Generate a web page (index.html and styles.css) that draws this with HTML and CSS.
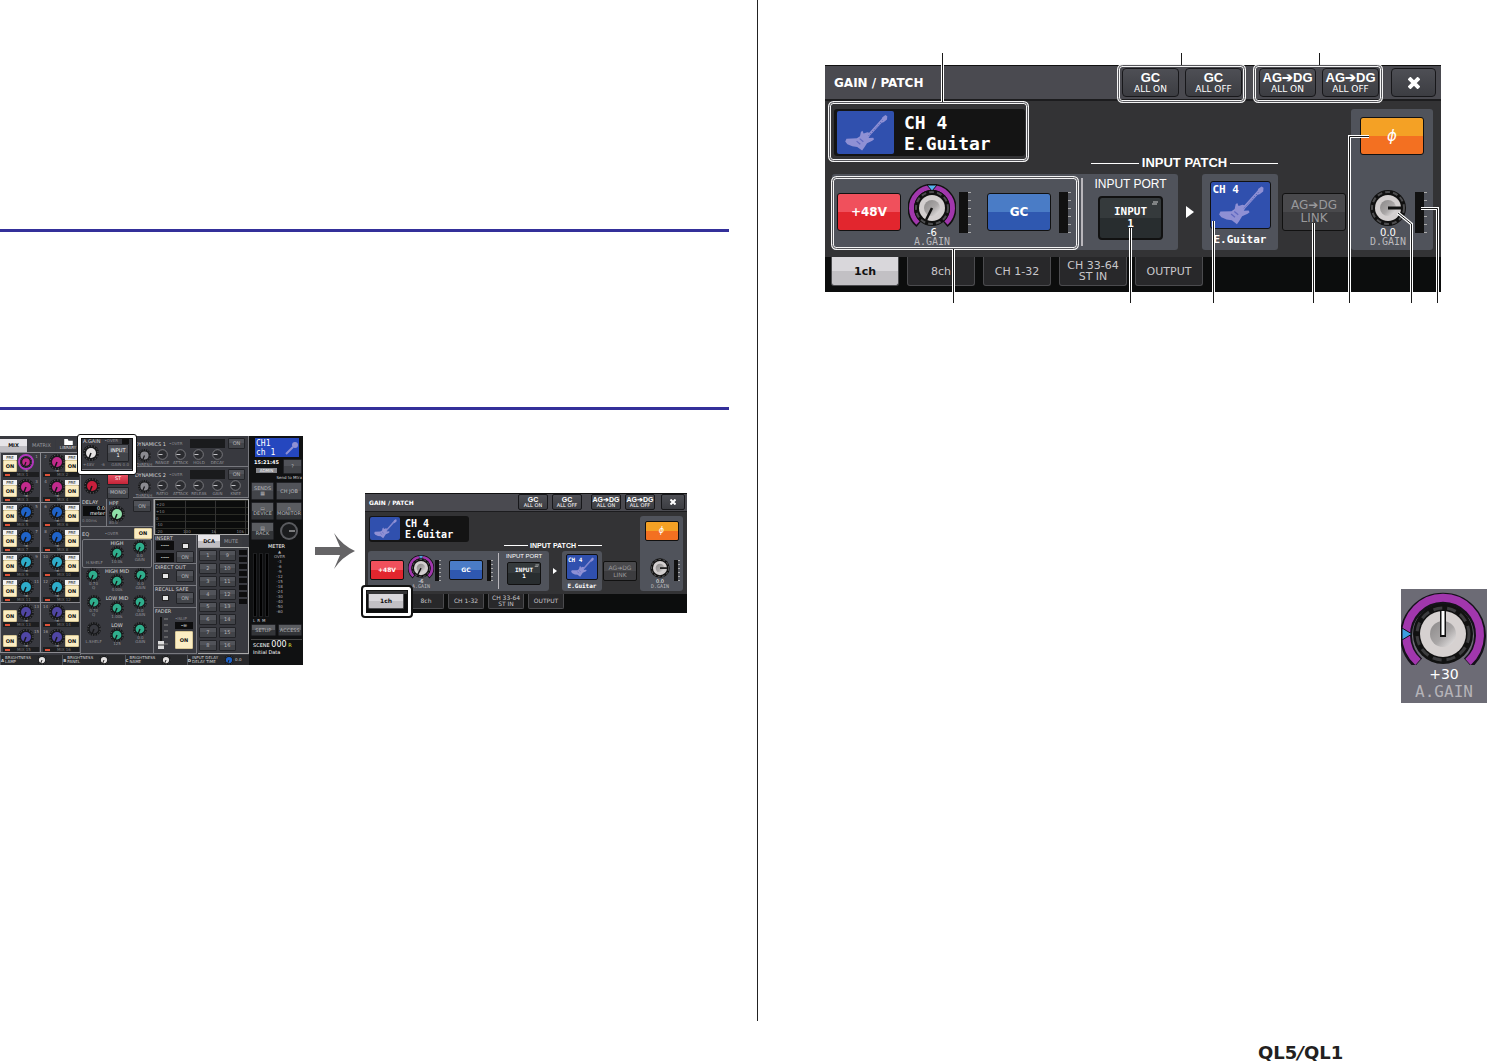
FILE: index.html
```html
<!DOCTYPE html>
<html lang="en">
<head>
    <meta charset="UTF-8">
    <meta name="viewport" content="width=device-width, initial-scale=1.0">
    <title>QL5/QL1 Reference Manual</title>
    <link rel="stylesheet" href="styles.css">
</head>
<body>
    <svg class="defs" width="0" height="0" aria-hidden="true">
        <defs>
            <linearGradient id="metal" x1="0" y1="0" x2="1" y2="1">
                <stop offset="0" stop-color="#8a8888"/>
                <stop offset="0.55" stop-color="#a9a6a6"/>
                <stop offset="1" stop-color="#f0eded"/>
            </linearGradient>
        </defs>
        <symbol id="guitar" viewBox="0 0 182 140">
            <path fill="#8f90d4" d="M146 20l10-7 6 4-1 11-11 9-6 1-38 42-5 8 15-1 3 5-6 5-17 8-9 14-7 10-16-12-16-2-16-7-7-9 4-9 34-1 10-7 3-14 5-4 4 9 12-4 6 2 41-46z"/>
            <path fill="none" stroke="#3450b0" stroke-width="3" stroke-dasharray="3 5" d="M102 80l44-49"/>
            <path fill="none" stroke="#5f68c0" stroke-width="4" d="M62 98l12 10M72 90l12 10"/>
        </symbol>
        <symbol id="knob" viewBox="0 0 48 44">
            <circle cx="24" cy="24" r="18" fill="#101010"/>
            <circle cx="24" cy="24" r="16" fill="none" stroke="#4c4c4e" stroke-width="2" stroke-dasharray="5 3"/>
            <circle cx="24" cy="24" r="13" fill="#d3cfcf"/>
            <circle cx="24" cy="24" r="8" fill="url(#metal)"/>
        </symbol>
        <symbol id="ring" viewBox="0 0 48 44">
            <path fill="none" stroke="#111" stroke-width="8" d="M11 40A20.500 20.500 0 1 1 37 40"/>
            <path fill="none" stroke="#a137ad" stroke-width="5" d="M10 39A20.500 20.500 0 1 1 38 39"/>
        </symbol>
        <symbol id="dial" viewBox="0 0 16 16">
            <circle cx="8" cy="8" r="8" fill="#17181a"/>
            <circle cx="8" cy="8" r="7" fill="none" stroke="#77787c" stroke-width="1" stroke-dasharray="1 2"/>
            <circle cx="8" cy="8" r="5" fill="currentColor"/>
            <path stroke="#161618" stroke-width="1.500" d="M8 8l-2 5"/>
        </symbol>
        <symbol id="dial-line" viewBox="0 0 16 16">
            <circle cx="8" cy="8" r="7" fill="#2b2c30" stroke="#97989c" stroke-width="1"/>
            <path stroke="#c4c4c8" stroke-width="1.500" d="M8 8H2"/>
        </symbol>
    </svg>

    <main class="spread">
        <section class="page page-left">
            <hr class="rule rule-first">
            <hr class="rule rule-second">
            <div class="figure-row">
                <div class="console">
                    <div class="mixes">
                        <div class="mix-tabs">
                            <button class="mix-tab active">MIX</button>
                            <button class="mix-tab">MATRIX</button>
                            <button class="mix-tab library"><svg viewBox="0 0 10 7"><path fill="#fff" d="M0 0h4l1 2h5v5H0z"/></svg>LIBRARY</button>
                        </div>
                        <div class="mix-grid" id="mix-grid"></div>
                    </div>
                    <div class="centre">
                        <div class="upper">
                            <div class="input-col">
                                <div class="cell again">
                                    <div class="line"><span>A.GAIN</span><span class="dim">•OVER</span><i class="lamp"></i></div>
                                    <div class="line">
                                        <svg class="dial white"><use href="#dial"/></svg>
                                        <button class="key port-key">INPUT<br>1</button>
                                    </div>
                                    <div class="line dim"><span>+48V</span><span>-6</span><span>GAIN 0.0</span></div>
                                </div>
                                <div class="pan">
                                    <svg class="dial red"><use href="#dial"/></svg>
                                    <div class="stack">
                                        <button class="key st">ST</button>
                                        <button class="key">MONO</button>
                                    </div>
                                </div>
                            </div>
                            <div class="dynamics" id="dynamics"></div>
                        </div>
                        <div class="lower">
                            <div class="eq-col">
                                <div class="delay-row">
                                    <div class="cell delay">DELAY<div class="readout">0.0<br>meter</div><span class="dim">0.00ms</span></div>
                                    <div class="cell hpf"><span>HPF</span><button class="key">ON</button><svg class="dial mint"><use href="#dial"/></svg><span class="dim">80.0</span></div>
                                </div>
                                <div class="cell eq">
                                    <div class="line"><span>EQ</span><span class="dim">•OVER</span><button class="on">ON</button></div>
                                    <div id="eq-bands"></div>
                                </div>
                            </div>
                            <div class="output-col">
                                <div class="graph">
                                    <span>+20</span><span>+10</span><span>0</span><span>-10</span>
                                    <div class="line"><span>-20</span><span>100</span><span>1k</span><span>10k</span></div>
                                </div>
                                <div class="outs">
                                    <div class="out-stack">
                                        <div class="cell insert">INSERT<div class="out-pair"><b>----</b><i class="window"></i><b>----</b><button class="key">ON</button></div></div>
                                        <div class="cell">DIRECT OUT<div class="out-pair"><i class="window"></i><button class="key">ON</button></div></div>
                                        <div class="cell">RECALL SAFE<div class="out-pair"><i class="window"></i><button class="key">ON</button></div></div>
                                        <div class="cell fader">FADER
                                            <div class="fader-body">
                                                <svg viewBox="0 0 16 34"><path stroke="#111" stroke-width="2" d="M5 1v32"/><path stroke="#888" d="M8 3h4M8 9h4M8 15h4M8 21h4M8 28h4"/><path fill="#ddd" d="M2 25h6v8H2z"/><path stroke="#333" d="M2 29h6"/></svg>
                                                <div class="stack"><span class="dim">•ISLIP</span><b>-∞</b><button class="on big">ON</button></div>
                                            </div>
                                        </div>
                                    </div>
                                    <div class="dca">
                                        <div class="dca-tabs"><button class="mix-tab active">DCA</button><button class="mix-tab">MUTE</button></div>
                                        <div class="dca-body"><div class="dca-grid" id="dca-grid"></div><div class="mute-lamps"></div></div>
                                    </div>
                                </div>
                            </div>
                        </div>
                    </div>
                    <div class="side">
                        <div class="side-channel"><span>CH1<br>ch 1</span><svg viewBox="0 0 14 14"><circle cx="10" cy="4" r="3" fill="#8f90d4"/><path stroke="#8f90d4" stroke-width="2" d="M8 6L1 13"/></svg></div>
                        <div class="side-clock"><div><b>15:21:45</b><span class="admin">ADMIN</span></div><button class="key">?</button></div>
                        <div class="side-note">Send to Mtrx</div>
                        <div class="side-keys">
                            <button class="key">SENDS<br>▦</button><button class="key">CH JOB</button>
                            <button class="key glossy">▭<br>DEVICE</button><button class="key glossy">∩<br>MONITOR</button>
                            <button class="key glossy">▤<br>RACK</button>
                            <svg class="dial" viewBox="0 0 18 18"><circle cx="9" cy="9" r="9" fill="#5a5b5f"/><circle cx="9" cy="9" r="7" fill="#1b1c1e"/><path stroke="#ddd" d="M9 9h6"/></svg>
                        </div>
                        <div class="side-title">METER</div>
                        <div class="side-meter">
                            <i></i><i></i><i></i>
                            <ul><li>▲</li><li>OVER</li><li>-3</li><li>-6</li><li>-9</li><li>-12</li><li>-15</li><li>-18</li><li>-24</li><li>-30</li><li>-40</li><li>-50</li><li>-60</li></ul>
                        </div>
                        <div class="side-lrm">L&ensp;R&ensp;M</div>
                        <div class="side-keys setup"><button class="key glossy">SETUP</button><button class="key glossy">ACCESS</button></div>
                        <div class="side-scene"><span>SCENE <b>000</b> <em>R</em></span><span>Initial Data</span></div>
                    </div>
                    <div class="console-foot">
                        <div><b>A</b><span>BRIGHTNESS<br>LAMP</span><svg class="dial white"><use href="#dial"/></svg></div>
                        <div><b>B</b><span>BRIGHTNESS<br>PANEL</span><svg class="dial white"><use href="#dial"/></svg></div>
                        <div><b>C</b><span>BRIGHTNESS<br>NAME</span><svg class="dial white"><use href="#dial"/></svg></div>
                        <div><b>D</b><span>INPUT DELAY<br>DELAY TIME</span><svg class="dial blue"><use href="#dial"/></svg><span>0.0</span></div>
                    </div>
                    <div class="highlight highlight-gain"></div>
                </div>
                <svg class="arrow" viewBox="0 0 40 36" aria-hidden="true"><path fill="#656466" d="M0 14h25L19 0q8 12 21 18-13 6-21 18l6-14H0z"/></svg>
                <div class="mini-figure">
                    <div class="gain-panel mini" data-panel></div>
                    <div class="highlight highlight-tab"></div>
                </div>
            </div>
        </section>

        <section class="page page-right">
            <div class="figure-large">
                <div class="gain-panel" data-panel></div>
                <svg class="callouts" viewBox="825 53 616 250" aria-hidden="true">
                    <g class="frame">
                        <rect x="1118.500" y="65.500" width="126" height="36" rx="4"/>
                        <rect x="1254.500" y="65.500" width="127" height="36" rx="4"/>
                        <rect x="829.500" y="102.500" width="198" height="58" rx="4"/>
                        <rect x="832.500" y="177.500" width="245" height="71" rx="4"/>
                    </g>
                    <g class="frame-core">
                        <rect x="1118.500" y="65.500" width="126" height="36" rx="4"/>
                        <rect x="1254.500" y="65.500" width="127" height="36" rx="4"/>
                        <rect x="829.500" y="102.500" width="198" height="58" rx="4"/>
                        <rect x="832.500" y="177.500" width="245" height="71" rx="4"/>
                    </g>
                    <g class="lead-halo">
                        <path d="M942.500 65v37M953.500 249v43M1130.500 228v64M1213.500 221v71M1313.500 223v69M1369 136.500h-19.500V292M1398 213l13.500 11v68M1421 208.500h16.500V292"/>
                    </g>
                    <g class="lead">
                        <path d="M942.500 53v49M1181.500 53v12M1319.500 53v12M953.500 249v54M1130.500 228v75M1213.500 221v82M1313.500 223v80M1369 136.500h-19.500V303M1398 213l13.500 11v79M1421 208.500h16.500V303"/>
                    </g>
                </svg>
            </div>
            <div class="gain-closeup">
                <svg viewBox="0 0 86 76" aria-hidden="true">
                    <path fill="none" stroke="#15121a" stroke-width="12" d="M17 74A37 37 0 1 1 67 74"/>
                    <path fill="none" stroke="#a137ad" stroke-width="8" d="M17 73A37 37 0 1 1 67 73"/>
                    <circle cx="42" cy="45" r="30" fill="#111"/>
                    <circle cx="42" cy="45" r="26" fill="none" stroke="#3c3c3e" stroke-width="3" stroke-dasharray="9 5"/>
                    <circle cx="42" cy="45" r="23" fill="#d6d1d0"/>
                    <circle cx="42" cy="45" r="13" fill="url(#metal)"/>
                    <path stroke="#111" stroke-width="6" d="M42 21v27"/>
                    <path stroke="#fff" stroke-width="3" d="M42 22v24"/>
                    <path fill="#3c9de0" stroke="#111" d="M1 39l10 6-10 6z"/>
                </svg>
                <div class="closeup-value">+30</div>
                <div class="closeup-label">A.GAIN</div>
            </div>
        </section>
    </main>
    <footer class="page-foot"><span class="logo">QL5<i>/</i>QL1</span></footer>

    <template id="panel-template">
        <div class="gain-head">
            <span class="gain-title">GAIN / PATCH</span>
            <div class="head-group">
                <button class="head-btn"><b>GC</b><span>ALL ON</span></button>
                <button class="head-btn"><b>GC</b><span>ALL OFF</span></button>
            </div>
            <div class="head-group">
                <button class="head-btn"><b>AG➔DG</b><span>ALL ON</span></button>
                <button class="head-btn"><b>AG➔DG</b><span>ALL OFF</span></button>
            </div>
            <button class="head-btn close" aria-label="Close"><svg viewBox="0 0 12 12"><path stroke="#fff" stroke-width="4" d="M1 1l10 10M11 1L1 11"/></svg></button>
        </div>
        <div class="gain-body">
            <div class="gain-main">
                <div class="channel-name">
                    <svg><use href="#guitar"/></svg>
                    <div>CH 4<br>E.Guitar</div>
                </div>
                <div class="patch-label">INPUT PATCH</div>
                <div class="strip">
                    <div class="block block-gain">
                        <button class="key48 pad-btn">+48V</button>
                        <div class="knob-col">
                            <svg viewBox="0 0 48 44"><use href="#ring"/><use href="#knob"/><path fill="#54b4f0" stroke="#111" d="M19 1h10l-5 6z"/><path stroke="#111" stroke-width="2.500" d="M24 24l-6 12"/></svg>
                            <span>-6</span><span class="knob-label">A.GAIN</span>
                        </div>
                        <i class="meter"></i>
                        <button class="gc pad-btn">GC</button>
                        <i class="meter"></i>
                        <div class="port">
                            <span>INPUT PORT</span>
                            <button class="port-btn">INPUT<br>1<svg viewBox="0 0 7 5"><path fill="none" stroke="#ccc" d="M2 1h5M1 3h5"/></svg></button>
                        </div>
                    </div>
                    <svg class="play" viewBox="0 0 8 12"><path fill="#fff" d="M0 0l8 6-8 6z"/></svg>
                    <div class="block block-channel">
                        <button class="channel-btn"><svg><use href="#guitar"/></svg><span>CH 4</span></button>
                        <span class="channel-caption">E.Guitar</span>
                    </div>
                    <button class="link-btn pad-btn">AG➔DG<br>LINK</button>
                </div>
            </div>
            <div class="block block-digital">
                <button class="phase pad-btn">ϕ</button>
                <div class="digital-row">
                    <div class="knob-col">
                        <svg viewBox="0 0 48 44"><use href="#knob"/><path stroke="#111" stroke-width="3" d="M24 24h14"/></svg>
                        <span>0.0</span><span class="knob-label">D.GAIN</span>
                    </div>
                    <i class="meter"></i>
                </div>
            </div>
        </div>
        <div class="gain-tabs">
            <button class="tab active">1ch</button>
            <button class="tab">8ch</button>
            <button class="tab">CH 1-32</button>
            <button class="tab">CH 33-64<br>ST IN</button>
            <button class="tab">OUTPUT</button>
        </div>
    </template>
    <script src="script.js"></script>
</body>
</html>
```

FILE: styles.css
```css
* {
    box-sizing: border-box;
}
body {
    margin: 0;
    min-height: 100vh;
    display: flex;
    flex-direction: column;
    background: #fff;
    font-family: "DejaVu Sans", sans-serif;
}
button {
    margin: 0;
    padding: 0;
    border: 1px solid #111;
    font-family: inherit;
    color: inherit;
}
svg {
    display: block;
    flex: none;
}
.defs {
    position: absolute;
}
.spread {
    flex: 1;
    display: grid;
    grid-template-columns: 758fr 730fr;
}
.page-left {
    border-right: 1px solid #222;
    padding-right: 28px;
}
.page-right {
    padding: 65px 1px 0 67px;
}
.rule {
    height: 3px;
    border: 0;
    margin: 0;
    background: #34309a;
}
.rule-first {
    margin-top: 229px;
}
.rule-second {
    margin-top: 175px;
    margin-bottom: 26px;
}
.figure-row {
    display: flex;
    align-items: center;
}
.arrow {
    width: 40px;
    height: 36px;
    margin: 0 10px 0 12px;
}
.page-foot {
    height: 40px;
    padding-right: 98px;
    display: flex;
    justify-content: flex-end;
    align-items: flex-end;
}
.logo {
    width: 132px;
    font-size: 18px;
    line-height: 16px;
    font-weight: bold;
    color: #231f20;
}

/* gain / patch window */
.gain-panel {
    max-width: 616px;
    background: #0c0d0d;
    color: #fff;
    font-size: 11px;
}
.gain-head {
    height: 36px;
    padding: 0 5px 0 9px;
    display: flex;
    align-items: center;
    background: #4a4a50;
    border-top: 1px solid #111;
    border-bottom: 2px solid #1c1c1e;
}
.gain-title {
    flex: 1;
    font-size: 12px;
    font-weight: bold;
    white-space: nowrap;
}
.head-group {
    display: flex;
    gap: 6px;
    margin-left: 17px;
}
.head-btn {
    width: 57px;
    height: 29px;
    display: flex;
    flex-direction: column;
    align-items: center;
    justify-content: center;
    background: linear-gradient(#4e4f55, #3c3d42);
    border: 1px solid #17171a;
    border-radius: 4px;
    font-size: 9px;
    line-height: 10px;
    white-space: nowrap;
}
.head-btn b {
    font-family: "Liberation Sans", sans-serif;
    font-size: 13px;
    line-height: 13px;
}
.head-btn.close {
    width: 45px;
    margin-left: 12px;
}
.close svg {
    width: 12px;
    height: 12px;
}
.gain-body {
    display: flex;
    gap: 5px;
    padding: 8px 8px 7px 7px;
    background: #333335;
}
.gain-main {
    flex: 1;
}
.channel-name {
    width: 191px;
    height: 47px;
    margin-left: 2px;
    padding: 2px 3px;
    display: flex;
    align-items: center;
    gap: 10px;
    background: #141414;
    border-radius: 3px;
    font: bold 18px/21px "DejaVu Sans Mono", monospace;
    white-space: nowrap;
}
.channel-name svg {
    width: 57px;
    height: 43px;
    background: #3050ae;
    border-radius: 2px;
}
.patch-label {
    width: 187px;
    margin: 0 0 4px 259px;
    display: flex;
    align-items: center;
    gap: 3px;
    font: bold 13px/14px "Liberation Sans", sans-serif;
    white-space: nowrap;
}
.patch-label::before,
.patch-label::after {
    content: "";
    flex: 1;
    height: 1px;
    background: #fff;
}
.strip {
    display: flex;
    align-items: center;
}
.block {
    background: #50535b;
    border-radius: 3px;
}
.block-gain {
    flex: 1;
    height: 76px;
    padding-left: 5px;
    display: flex;
    align-items: flex-start;
}
.pad-btn {
    flex: none;
    width: 64px;
    height: 38px;
    border-radius: 3px;
    font-size: 12px;
    font-weight: bold;
}
.block-gain .pad-btn {
    margin-top: 19px;
}
.key48 {
    background: linear-gradient(#f0505c 50%, #e2262e 50%);
}
.block-gain .gc {
    margin-left: 16px;
    background: linear-gradient(#4a7cc6 50%, #2f58b0 50%);
}
.knob-col {
    width: 48px;
    margin: 10px 3px 0 7px;
    display: flex;
    flex-direction: column;
    align-items: center;
    font-size: 10px;
    line-height: 9px;
}
.knob-col svg {
    width: 48px;
    height: 44px;
}
.knob-label {
    font-family: "DejaVu Sans Mono", monospace;
    font-size: 10px;
    color: #bbb9bd;
}
.meter {
    flex: none;
    width: 12px;
    height: 41px;
    margin-top: 18px;
    background: linear-gradient(90deg, #111 9px, transparent 9px), repeating-linear-gradient(#aaa 0 1px, transparent 1px 8px);
}
.gc + .meter {
    margin-left: 8px;
}
.port {
    flex: 1;
    height: 68px;
    margin: 4px 0 0 10px;
    border-left: 2px solid #b9b7bc;
    display: flex;
    flex-direction: column;
    align-items: center;
    gap: 6px;
    font: 12px/12px "Liberation Sans", sans-serif;
    white-space: nowrap;
}
.port-btn {
    position: relative;
    width: 65px;
    height: 44px;
    border: 2px solid #111;
    border-radius: 4px;
    background: linear-gradient(#353a3c 50%, #282d2f 50%);
    font: bold 11px/12px "DejaVu Sans Mono", monospace;
}
.port-btn svg {
    position: absolute;
    top: 3px;
    right: 3px;
    width: 7px;
    height: 5px;
}
.play {
    width: 8px;
    height: 12px;
    margin: 0 8px;
}
.block-channel {
    width: 76px;
    height: 76px;
    margin-right: 4px;
    padding-top: 7px;
    display: flex;
    flex-direction: column;
    align-items: center;
    gap: 5px;
}
.channel-btn {
    width: 61px;
    height: 48px;
    display: grid;
    background: #3050ae;
    border-radius: 3px;
}
.channel-btn svg,
.channel-btn span {
    grid-area: 1 / 1;
}
.channel-btn svg {
    width: 59px;
    height: 46px;
}
.channel-btn span {
    justify-self: start;
    padding: 2px;
    font: bold 11px/12px "DejaVu Sans Mono", monospace;
}
.channel-caption {
    font: bold 11px/12px "DejaVu Sans Mono", monospace;
}
.link-btn {
    background: linear-gradient(#49494c 50%, #3c3c3f 50%);
    color: #99999c;
    font-weight: normal;
    line-height: 13px;
    white-space: nowrap;
}
.block-digital {
    width: 82px;
    padding-top: 8px;
    display: flex;
    flex-direction: column;
    align-items: center;
    gap: 19px;
}
.phase {
    background: linear-gradient(#f4a125 50%, #f37021 50%);
    font-size: 15px;
    font-style: italic;
    font-weight: normal;
}
.digital-row {
    display: flex;
}
.gain-tabs {
    height: 35px;
    padding-left: 6px;
    display: flex;
    align-items: flex-start;
    gap: 8px;
}
.tab {
    width: 68px;
    height: 29px;
    border: 1px solid #4b4b4e;
    border-top: 0;
    border-radius: 0 0 3px 3px;
    background: #28282a;
    color: #c9c7ca;
    font-size: 11px;
    line-height: 11px;
    white-space: nowrap;
}
.tab.active {
    background: linear-gradient(#d9d7db 50%, #c2c0c4 50%);
    color: #111;
    font-weight: bold;
}

/* half size copy of the window */
.mini {
    width: 322px;
    font-size: 6px;
}
.mini .gain-head {
    height: 19px;
    padding: 0 2px 0 4px;
    border-bottom-width: 1px;
}
.mini .gain-title {
    font-size: 6px;
}
.mini .head-group {
    gap: 4px;
    margin-left: 9px;
}
.mini .head-btn {
    width: 30px;
    height: 16px;
    border-radius: 2px;
    font-size: 5px;
    line-height: 5px;
}
.mini .head-btn b {
    font-size: 7px;
    line-height: 7px;
}
.mini .head-btn.close {
    width: 24px;
    margin-left: 6px;
}
.mini .close svg {
    width: 6px;
    height: 6px;
}
.mini .gain-body {
    gap: 3px;
    padding: 4px 4px 3px 3px;
}
.mini .channel-name {
    width: 100px;
    height: 26px;
    margin-left: 1px;
    padding: 1px;
    gap: 5px;
    font-size: 10px;
    line-height: 11px;
}
.mini .channel-name svg {
    width: 30px;
    height: 23px;
}
.mini .patch-label {
    width: 98px;
    margin: 0 0 1px 136px;
    gap: 2px;
    font-size: 7px;
    line-height: 8px;
}
.mini .block-gain {
    height: 40px;
    padding-left: 2px;
}
.mini .pad-btn {
    width: 34px;
    height: 20px;
    border-radius: 2px;
    font-size: 6px;
}
.mini .block-gain .pad-btn {
    margin-top: 9px;
}
.mini .block-gain .gc {
    margin-left: 8px;
}
.mini .knob-col {
    width: 26px;
    margin: 4px 1px 0 4px;
    font-size: 5px;
    line-height: 5px;
}
.mini .knob-col svg {
    width: 26px;
    height: 24px;
}
.mini .knob-label {
    font-size: 5px;
}
.mini .meter {
    width: 6px;
    height: 21px;
    margin-top: 9px;
    background: linear-gradient(90deg, #111 4px, transparent 4px), repeating-linear-gradient(#aaa 0 1px, transparent 1px 4px);
}
.mini .gc + .meter {
    margin-left: 4px;
}
.mini .port {
    height: 36px;
    margin: 2px 0 0 5px;
    border-left-width: 1px;
    gap: 2px;
    font-size: 6px;
    line-height: 7px;
}
.mini .port-btn {
    width: 34px;
    height: 23px;
    border-width: 1px;
    border-radius: 2px;
    font-size: 6px;
    line-height: 6px;
}
.mini .port-btn svg {
    top: 1px;
    right: 1px;
    width: 5px;
    height: 4px;
}
.mini .play {
    width: 4px;
    height: 6px;
    margin: 0 5px 0 4px;
}
.mini .block-channel {
    width: 40px;
    height: 40px;
    margin-right: 1px;
    padding-top: 3px;
    gap: 2px;
}
.mini .channel-btn {
    width: 32px;
    height: 26px;
    border-radius: 2px;
}
.mini .channel-btn svg {
    width: 30px;
    height: 24px;
}
.mini .channel-btn span {
    padding: 1px;
}
.mini .channel-btn span,
.mini .channel-caption {
    font-size: 6px;
    line-height: 7px;
}
.mini .link-btn {
    line-height: 7px;
}
.mini .block-digital {
    width: 43px;
    padding-top: 5px;
    gap: 10px;
}
.mini .phase {
    font-size: 8px;
}
.mini .gain-tabs {
    height: 19px;
    padding-left: 3px;
    gap: 4px;
}
.mini .tab {
    width: 36px;
    height: 15px;
    border-radius: 0 0 2px 2px;
    font-size: 6px;
    line-height: 6px;
}

/* figure overlays */
.figure-large {
    position: relative;
    width: 616px;
}
.callouts {
    position: absolute;
    left: 0;
    top: -12px;
    width: 616px;
    height: 250px;
    pointer-events: none;
}
.callouts g {
    fill: none;
}
.frame {
    stroke: #f4f4f4;
    stroke-width: 3;
}
.frame-core {
    stroke: #55555a;
    stroke-width: 1;
}
.lead-halo {
    stroke: #fff;
    stroke-width: 3;
}
.lead {
    stroke: #1a1a1a;
    stroke-width: 1;
}
.mini-figure {
    position: relative;
    margin-top: 4px;
}
.highlight {
    position: absolute;
    border: 3px solid #fff;
    border-radius: 2px;
    outline: 1px solid #111;
    box-shadow: inset 0 0 0 1px #111;
    pointer-events: none;
}
.highlight-tab {
    left: -2px;
    top: 94px;
    width: 48px;
    height: 29px;
    outline-width: 2px;
}
.highlight-gain {
    left: 78px;
    top: -1px;
    width: 58px;
    height: 39px;
}

.gain-closeup {
    width: 86px;
    height: 114px;
    margin: 297px 0 0 auto;
    background: #6c6b75;
    text-align: center;
}
.gain-closeup svg {
    width: 86px;
    height: 76px;
}
.closeup-value {
    font-size: 14px;
    line-height: 19px;
    color: #fff;
}
.closeup-label {
    font: 16px/16px "DejaVu Sans Mono", monospace;
    color: #b5b3b8;
}

/* mixer overview screen */
.console {
    position: relative;
    width: 303px;
    height: 229px;
    display: grid;
    grid-template-columns: 81px minmax(0, 1fr) 54px;
    grid-template-rows: 1fr 10px;
    background: #38393f;
    color: #d4d4d6;
    font-size: 5px;
    line-height: 6px;
    white-space: nowrap;
}
.console button,
.readout,
.console b {
    line-height: 5px;
}
.dim {
    color: #8b8b90;
    font-size: 4px;
}
.line {
    display: flex;
    justify-content: space-between;
    align-items: center;
}
.stack {
    display: flex;
    flex-direction: column;
    gap: 2px;
}
.cell {
    border: 1px solid #77787e;
    border-width: 0 1px 1px 0;
    overflow: hidden;
}
.dial {
    width: 16px;
    height: 16px;
}
.white { color: #e4e2e2; }
.red { color: #c81f3c; }
.pink { color: #c22a8c; }
.blue { color: #1f63c8; }
.cyan { color: #2eacc9; }
.violet { color: #5046a4; }
.mint { color: #8fe0a8; }
.green { color: #2fae8c; }
.grey { color: #8b8b90; }
.key {
    background: linear-gradient(#515359 50%, #424449 50%);
    border-color: #222327;
    border-radius: 1px;
    font-size: 5px;
    color: #b5b5b9;
}
.on {
    width: 18px;
    height: 11px;
    background: #fbedc3;
    border-color: #d8c795;
    border-radius: 1px;
    color: #111;
    font-size: 5px;
    font-weight: bold;
}
.mixes {
    min-width: 0;
    border-right: 1px solid #77787e;
}
.mix-tabs {
    height: 16px;
    padding-top: 3px;
    display: flex;
    gap: 1px;
}
.mix-tab {
    width: 27px;
    border: 0;
    background: #3a3b40;
    color: #9c9ca0;
    font-size: 5px;
}
.mix-tab.active {
    background: linear-gradient(#e6e4e8 50%, #bfbdc2 50%);
    color: #111;
    font-weight: bold;
}
.library {
    flex: 1;
    display: flex;
    flex-direction: column;
    align-items: center;
    color: #ddd;
    font-size: 4px;
}
.library svg {
    width: 9px;
    height: 6px;
}
.mix-grid {
    display: grid;
    grid-template-columns: repeat(2, minmax(0, 1fr));
    border-top: 1px solid #8b8b91;
}
.mix {
    height: 25px;
    padding: 1px 1px 0 2px;
    border-left: 1px solid #8b8b91;
    display: grid;
    grid-template-columns: 14px 17px minmax(0, 1fr);
    grid-template-rows: 18px 5px;
}
.mix:nth-child(even) {
    grid-template-columns: minmax(0, 1fr) 17px 14px;
}
.mix:nth-child(4n + 3),
.mix:nth-child(4n) {
    border-bottom: 1px solid #8b8b91;
}
.mix:nth-child(even) .mix-send { order: 3; }
.mix:nth-child(even) .mix-knob { order: 2; }
.mix:nth-child(even) .mix-name { order: 4; }
.mix-send {
    display: flex;
    flex-direction: column;
    justify-content: flex-end;
}
.mix-send .pre {
    background: #f2f2f2;
    color: #111;
    font-size: 4px;
    line-height: 5px;
    text-align: center;
}
.mix-send .on {
    width: 14px;
    height: 12px;
}
.mix-knob {
    margin-left: 1px;
    font-size: 4px;
    line-height: 2px;
    text-align: center;
}
.mix:first-child .mix-knob .dial {
    border: 2px solid #b137bd;
    border-radius: 50%;
}
.mix-number {
    font-size: 4px;
    color: #a3a3a8;
    text-align: center;
}
.mix-name {
    grid-column: 1 / 4;
    display: flex;
    align-items: center;
    gap: 7px;
    font-size: 4px;
    line-height: 5px;
    background: #1d1e20;
    color: #77787c;
}
.mix-name::before {
    content: "";
    width: 5px;
    height: 2px;
    margin-left: 2px;
    background: #e0533a;
}
.centre {
    min-width: 0;
    display: flex;
    flex-direction: column;
}
.upper {
    height: 63px;
    display: flex;
}
.input-col {
    width: 52px;
}
.again {
    height: 34px;
    padding: 2px 3px 0 2px;
}
.port-key {
    width: 22px;
    height: 18px;
    color: #fff;
}
.lamp {
    width: 7px;
    height: 5px;
    background: #111;
}
.pan {
    height: 29px;
    padding: 2px 3px 0;
    display: flex;
    align-items: center;
    gap: 7px;
}
.pan .key {
    width: 22px;
    height: 12px;
}
.pan .st {
    background: linear-gradient(#ea5566, #c52438);
    color: #fff;
}
.dynamics {
    flex: 1;
    min-width: 0;
}
.dyn {
    height: 31px;
    padding: 2px 3px 0 2px;
}
.dyn .line {
    gap: 3px;
}
.dyn-screen {
    flex: 1;
    height: 9px;
    margin-left: 4px;
    background: #1a1b1d;
}
.dyn .key {
    width: 17px;
    height: 11px;
}
.dyn-knobs {
    display: grid;
    grid-template-columns: 18px repeat(5, 1fr);
    justify-items: center;
    font-size: 4px;
    line-height: 5px;
    color: #97979c;
}
.dyn-knobs svg {
    width: 11px;
    height: 11px;
}
.dyn-knobs div {
    display: flex;
    flex-direction: column;
    align-items: center;
}
.dyn-knobs div:first-child svg {
    width: 13px;
    height: 13px;
}
.lower {
    flex: 1;
    min-height: 0;
    display: flex;
}
.eq-col {
    width: 73px;
}
.delay-row {
    height: 28px;
    display: flex;
}
.delay {
    width: 26px;
    padding-left: 1px;
}
.readout {
    margin: 1px;
    background: #0c0c0d;
    color: #fff;
    text-align: right;
}
.hpf {
    flex: 1;
    padding: 1px 2px;
    display: grid;
    grid-template-columns: 1fr 18px;
    grid-template-rows: 6px 14px 5px;
}
.hpf .key {
    grid-area: 1 / 2 / 3 / 3;
    height: 12px;
}
.eq {
    height: 127px;
    padding: 1px;
}
.band {
    height: 27px;
    display: grid;
    grid-template-columns: 1fr 1fr 1fr;
    justify-items: center;
    text-align: center;
    font-size: 4px;
    line-height: 4px;
    color: #97979c;
}
.band svg {
    width: 14px;
    height: 14px;
    margin: 0 auto;
}
.band:first-child {
    border: 1px solid #77787e;
    border-radius: 2px;
    height: 29px;
}
.band div:nth-child(2) b {
    display: block;
    font-size: 5px;
    line-height: 6px;
    font-weight: normal;
    color: #ddd;
}
.band .shelf {
    align-self: end;
    padding-bottom: 2px;
}
.band .off {
    color: #38393f;
}
.output-col {
    flex: 1;
    min-width: 0;
    display: flex;
    flex-direction: column;
}
.graph {
    height: 36px;
    padding: 2px 4px 0 1px;
    border: 1px solid #aaa;
    display: flex;
    flex-direction: column;
    justify-content: space-between;
    background: repeating-linear-gradient(90deg, #333 0 1px, transparent 1px 30px), repeating-linear-gradient(#2b2c26 0 1px, transparent 1px 7px), #0b0c0c;
    color: #8b8b90;
    font-size: 4px;
    line-height: 5px;
}
.outs {
    flex: 1;
    min-height: 0;
    display: flex;
}
.out-stack {
    width: 43px;
}
.out-stack .cell {
    height: 22px;
    padding-left: 1px;
}
.out-stack .insert {
    height: 29px;
}
.out-stack .fader {
    height: 46px;
}
.out-pair {
    padding: 0 1px;
    display: grid;
    grid-template-columns: 18px 18px;
    gap: 1px 2px;
    align-items: center;
}
.out-pair b,
.fader b {
    background: #0d0d0e;
    height: 9px;
    line-height: 9px;
    text-align: center;
}
.out-pair .key {
    height: 12px;
}
.window {
    width: 7px;
    height: 6px;
    background: #e6e6e6;
    border: 1px solid #222;
    justify-self: center;
}
.fader-body {
    padding: 2px 1px;
    display: flex;
    gap: 3px;
}
.fader svg {
    width: 16px;
    height: 34px;
}
.fader .stack {
    gap: 0;
}
.fader b {
    height: 7px;
    line-height: 7px;
}
.on.big {
    height: 18px;
    margin-top: 2px;
}
.dca {
    flex: 1;
    padding-left: 1px;
}
.dca-tabs {
    height: 12px;
    display: flex;
}
.dca-tabs .mix-tab {
    width: 22px;
}
.dca-body {
    height: 107px;
    padding: 2px 1px;
    border: 1px solid #aaa;
    border-width: 1px 1px 1px 0;
    display: flex;
    gap: 3px;
}
.dca-grid {
    flex: 1;
    display: grid;
    grid-template-columns: 1fr 1fr;
    gap: 2px;
}
.mute-lamps {
    width: 8px;
    height: 55px;
    background: repeating-linear-gradient(#0d0d0e 0 5px, #38393f 5px 7px);
}
.side {
    grid-row: 1 / 3;
    grid-column: 3;
    padding: 2px 1px 0 2px;
    background: #101112;
    overflow: hidden;
}
.side-channel {
    height: 19px;
    margin: 0 3px 0 4px;
    padding-left: 1px;
    display: flex;
    justify-content: space-between;
    align-items: center;
    background: #2547bf;
    color: #fff;
    font: 8px/9px "DejaVu Sans Mono", monospace;
}
.side-channel svg {
    width: 14px;
    height: 14px;
}
.side-clock {
    height: 15px;
    margin-top: 2px;
    display: flex;
    justify-content: space-between;
}
.side-clock .key {
    width: 19px;
}
.side-clock div {
    display: flex;
    flex-direction: column;
    justify-content: space-around;
    align-items: center;
    padding-left: 3px;
    color: #fff;
}
.admin {
    padding: 0 4px;
    background: #85868b;
    font-size: 4px;
    line-height: 5px;
}
.side-note {
    margin: 1px 0 2px;
    font-size: 4px;
    line-height: 5px;
    text-align: right;
}
.side-keys {
    display: grid;
    grid-template-columns: 1fr 1fr;
    gap: 2px;
    grid-auto-rows: 18px;
}
.side-keys .key {
    font-size: 5px;
}
.side-keys .dial {
    width: 18px;
    height: 18px;
    margin: auto;
}
.glossy {
    background: linear-gradient(#5a5c60 50%, #333538 50%);
}
.side-title {
    margin-top: 3px;
    text-align: center;
    color: #fff;
}
.side-meter {
    height: 68px;
    padding-left: 2px;
    display: flex;
    gap: 2px;
}
.side-meter i {
    width: 4px;
    margin-top: 4px;
    background: #000;
    border: 1px solid #1e1f21;
}
.side-meter ul {
    margin: 0 0 0 3px;
    padding: 0;
    list-style: none;
    font-size: 4px;
    line-height: 5px;
    text-align: center;
    color: #b0b0b5;
}
.side-lrm {
    padding-left: 2px;
    font-size: 4px;
    line-height: 7px;
}
.side-keys.setup {
    grid-auto-rows: 12px;
}
.side-scene {
    margin-top: 3px;
    padding: 2px 0 0 2px;
    display: flex;
    flex-direction: column;
    border-top: 1px solid #444;
    color: #fff;
    line-height: 7px;
}
.side-scene b {
    font-size: 8px;
    font-weight: normal;
}
.side-scene em {
    font-style: normal;
    color: #e6e63c;
}
.console-foot {
    grid-column: 1 / 3;
    display: grid;
    grid-template-columns: repeat(4, 1fr);
    background: #28292c;
    font-size: 4px;
    line-height: 4px;
}
.console-foot div {
    display: flex;
    align-items: center;
    gap: 1px;
    border-left: 1px solid #55565b;
}
.console-foot .dial {
    width: 10px;
    height: 10px;
    margin-left: 5px;
}
```

FILE: script.js
```javascript
const panel = document.getElementById("panel-template");
document.querySelectorAll("[data-panel]").forEach(el => {
    el.append(panel.content.cloneNode(true));
});

const dial = (color, shape = "dial") => `<svg class="dial ${color}"><use href="#${shape}"/></svg>`;

// 16 mix sends, two per row, colour changes every four
const mixColors = ["pink", "blue", "cyan", "violet"];
let mixes = "";
for (let i = 0; i < 16; i++) {
    const pre = i < 12 ? `<span class="pre">PRE</span>` : "";
    const send = `<div class="mix-send">${pre}<button class="on">ON</button></div>`;
    const knob = `<div class="mix-knob">${dial(mixColors[Math.floor(i / 4)])}-∞</div>`;
    mixes += `<div class="mix">${send}${knob}<span class="mix-number">${i + 1}</span><div class="mix-name">MIX ${i + 1}</div></div>`;
}
document.getElementById("mix-grid").innerHTML = mixes;

const dynamics = [
    ["DYNAMICS 1", ["THRESHOLD", "RANGE", "ATTACK", "HOLD", "DECAY"]],
    ["DYNAMICS 2", ["THRESHOLD", "RATIO", "ATTACK", "RELEASE", "GAIN", "KNEE"]]
];
document.getElementById("dynamics").innerHTML = dynamics.map(([title, knobs]) => `
    <div class="cell dyn">
        <div class="line"><span>${title}</span><span class="dim">•OVER</span><i class="dyn-screen"></i><button class="key">ON</button></div>
        <div class="dyn-knobs">${knobs.map((name, i) => `<div>${i ? dial("", "dial-line") : dial("grey")}<span>${name.slice(0, 6)}</span></div>`).join("")}</div>
    </div>`).join("");

const bands = [["HIGH", "10.0k"], ["HIGH MID", "4.00k"], ["LOW MID", "1.00k"], ["LOW", "125"]];
document.getElementById("eq-bands").innerHTML = bands.map(([name, freq], i) => {
    let left = `<div>${dial("green")}0.70<br>Q</div>`;
    if (i === 0) left = `<div class="shelf">H.SHELF</div>`;
    if (i === 3) left = `<div>${dial("off")}<br>L.SHELF</div>`;
    return `<div class="band">${left}<div><b>${name}</b>${dial("green")}${freq}</div><div>${dial("green")}0.0<br>GAIN</div></div>`;
}).join("");

let dca = "";
for (let i = 1; i <= 8; i++) {
    dca += `<button class="key">${i}</button><button class="key">${i + 8}</button>`;
}
document.getElementById("dca-grid").innerHTML = dca;
```
